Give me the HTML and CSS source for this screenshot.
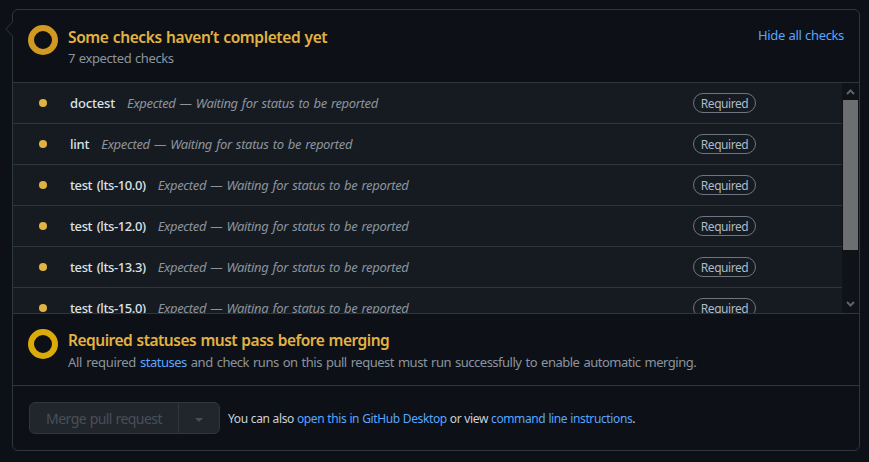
FILE: index.html
```html
<!DOCTYPE html>
<html lang="en">
<head>
<meta charset="utf-8">
<title>Merge status</title>
<link rel="stylesheet" href="styles.css">
</head>
<body>
<main class="merge-box">
  <svg class="caret" width="8" height="16" viewBox="0 0 8 16"><path d="M8 0v16L.5 8z" fill="#0d1117"/><path d="M8 .5L.8 8L8 15.5" fill="none" stroke="#30363d"/></svg>
  <section class="status status-checks">
    <span class="ring"></span>
    <div class="status-body">
      <h3><span class="t-some">Some checks haven’t completed yet</span></h3>
      <p><span class="t-seven">7 expected checks</span></p>
    </div>
    <a class="toggle" href="#"><span class="t-hide">Hide all checks</span></a>
  </section>
  <section class="checks">
    <ul class="check-list">
      <li><i class="dot"></i><b class="n-doctest">doctest</b><em>Expected — Waiting for status to be reported</em><span class="label">Required</span></li>
      <li><i class="dot"></i><b class="n-lint">lint</b><em>Expected — Waiting for status to be reported</em><span class="label">Required</span></li>
      <li><i class="dot"></i><b class="n-test">test (lts-10.0)</b><em>Expected — Waiting for status to be reported</em><span class="label">Required</span></li>
      <li><i class="dot"></i><b class="n-test">test (lts-12.0)</b><em>Expected — Waiting for status to be reported</em><span class="label">Required</span></li>
      <li><i class="dot"></i><b class="n-test">test (lts-13.3)</b><em>Expected — Waiting for status to be reported</em><span class="label">Required</span></li>
      <li><i class="dot"></i><b class="n-test">test (lts-15.0)</b><em>Expected — Waiting for status to be reported</em><span class="label">Required</span></li>
    </ul>
    <div class="scrollbar">
      <svg width="17" height="17" viewBox="0 0 17 17"><path d="M5 11L8.5 7.5L12 11" fill="none" stroke="#606366" stroke-width="2"/></svg>
      <span class="thumb"></span>
      <svg class="down" width="17" height="17" viewBox="0 0 17 17"><path d="M5 6L8.5 9.5L12 6" fill="none" stroke="#606366" stroke-width="2"/></svg>
    </div>
  </section>
  <section class="status status-required">
    <span class="ring ring-bright"></span>
    <div class="status-body">
      <h3><span class="t-req">Required statuses must pass before merging</span></h3>
      <p><span class="t-all"><span class="t-lead">All required </span><a href="#">statuses</a> and check runs on this pull request must run successfully to enable automatic merging.</span></p>
    </div>
  </section>
  <section class="actions">
    <div class="button-group">
      <button class="merge" disabled><span class="t-merge">Merge pull request</span></button>
      <button class="more" disabled aria-label="Select merge method"><svg width="8" height="4" viewBox="0 0 8 4"><path d="M0 0h8L4 4z" fill="#484f58"/></svg></button>
    </div>
    <p class="hint"><span class="t-hint">You can also <a href="#">open this in GitHub Desktop</a> or view <a href="#">command line instructions</a>.</span></p>
  </section>
</main>
</body>
</html>
```
FILE: styles.css
```css
* { box-sizing: border-box; }
body {
  margin: 0;
  padding: 9px 9px 0 12px;
  height: 462px;
  overflow: hidden;
  background: #0d1117;
  color: #c9d1d9;
  font: 13px/20px "Noto Sans", sans-serif;
}
h3, p, ul { margin: 0; padding: 0; }
a { color: #58a6ff; text-decoration: none; }
.merge-box {
  position: relative;
  width: 848px;
  height: 442px;
  border: 1px solid #30363d;
  border-radius: 6px;
}
.caret { position: absolute; left: -8px; top: 11px; }
.status {
  display: flex;
  padding: 15px 15px 0;
  border-bottom: 1px solid #30363d;
  white-space: nowrap;
}
.status-checks { height: 73px; }
.status-required { height: 72px; }
.ring {
  flex: none;
  width: 30px;
  height: 30px;
  border: 6px solid #d29922;
  border-radius: 50%;
}
.ring-bright { border-color: #dbab09; }
.status-body { flex: 1; margin-left: 10px; }
h3 { color: #e3b341; font-size: 15.5px; font-weight: 600; line-height: 24px; }
.status p { color: #8b949e; line-height: 19px; }
.status-required h3 { line-height: 22px; }
.status-required p { line-height: 23px; }
.toggle { line-height: 20px; }
.t-some { letter-spacing: -0.38px; word-spacing: 0.6px; }
.t-seven { letter-spacing: -0.38px; word-spacing: 0.7px; }
.t-hide { letter-spacing: -0.35px; word-spacing: 0.6px; }
.t-req { letter-spacing: -0.49px; word-spacing: 0.7px; }
.t-all { letter-spacing: -0.5px; word-spacing: 1.15px; }
.t-lead { letter-spacing: -0.33px; }
.t-merge { letter-spacing: -0.57px; word-spacing: 0.6px; }
.t-hint { letter-spacing: -0.38px; word-spacing: 0.3px; }
.checks {
  display: flex;
  height: 231px;
  overflow: hidden;
  background: #161b22;
  border-bottom: 1px solid #30363d;
}
.check-list { flex: 1; list-style: none; }
.check-list li {
  display: flex;
  align-items: center;
  height: 41px;
  padding: 0 86px 0 26px;
  border-bottom: 1px solid #30363d;
  white-space: nowrap;
  font-size: 12px;
}
.dot { width: 8px; height: 8px; margin-right: 23px; border-radius: 50%; background: #e3b341; }
.check-list b { font-weight: 500; color: #dce2e8; font-size: 13px; }
.n-doctest { letter-spacing: -0.15px; }
.n-lint { letter-spacing: -0.2px; }
.n-test { letter-spacing: -0.39px; word-spacing: 1.5px; }
.check-list em { margin-left: 12px; color: #8b949e; font-size: 13px; letter-spacing: -0.35px; word-spacing: 1.1px; }
.label {
  width: 63px;
  height: 20px;
  margin-left: auto;
  border: 1px solid #6e7681;
  border-radius: 10px;
  line-height: 19px;
  text-align: center;
  color: #adbac7;
  font-size: 12px;
  letter-spacing: -0.45px;
}
.scrollbar { display: flex; flex-direction: column; width: 17px; background: #0f1216; }
.thumb { height: 150px; margin: 0 1px; background: #6d6e71; }
.down { margin-top: auto; }
.actions { display: flex; align-items: center; height: 64px; padding-left: 16px; }
.button-group {
  display: flex;
  width: 191px;
  height: 32px;
  border: 1px solid #30363d;
  border-radius: 6px;
  background: #21262d;
}
button { border: 0; padding: 0; background: none; color: #484f58; font: 14px/20px "Noto Sans", sans-serif; }
.merge { width: 149px; padding-top: 2px; border-right: 1px solid #30363d; }
.more { display: flex; flex: 1; align-items: center; justify-content: center; padding-top: 3px; }
.hint { margin-left: 8px; padding-top: 2px; font-size: 12px; white-space: nowrap; }
```
